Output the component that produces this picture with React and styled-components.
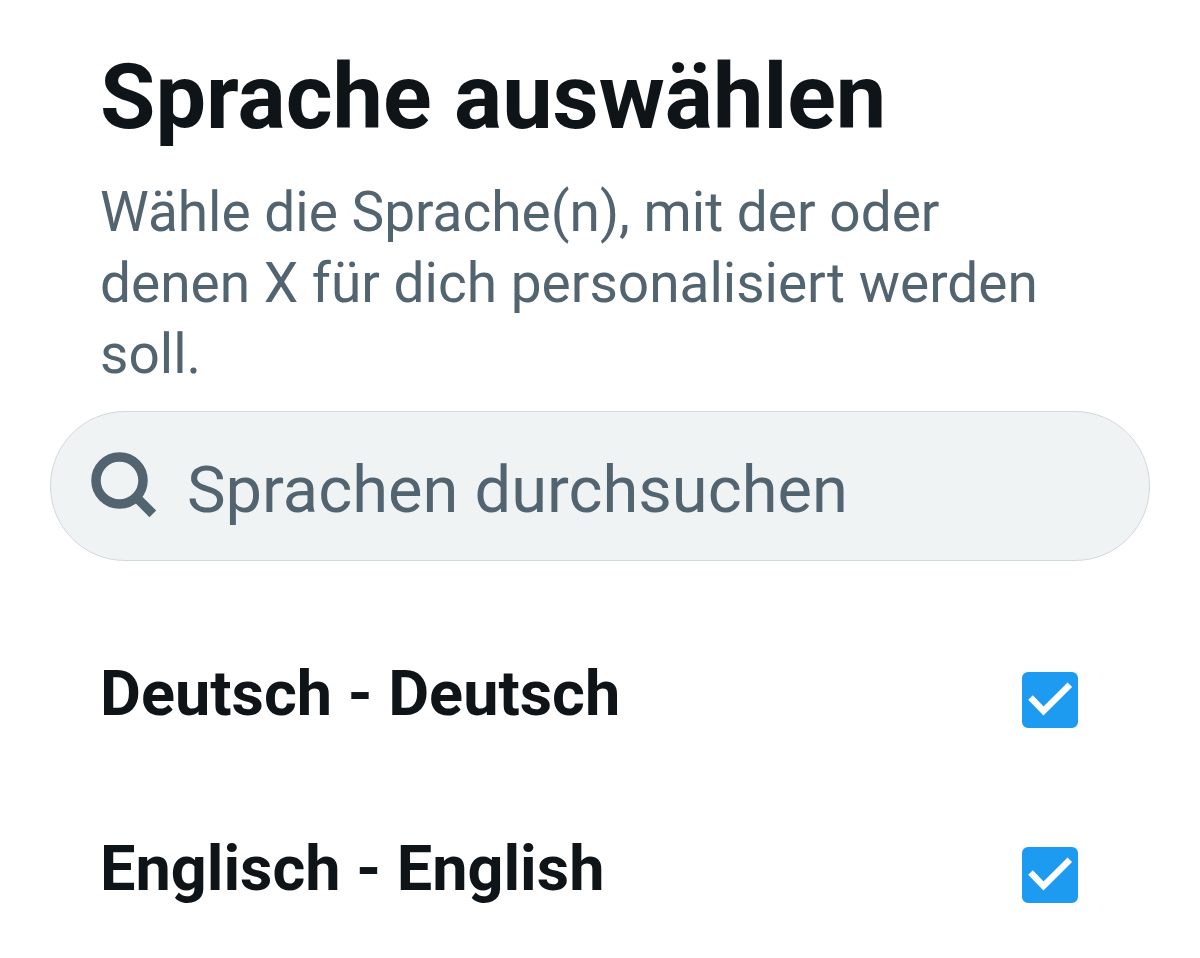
import React, { useState } from "react";
import styled, { createGlobalStyle } from "styled-components";

const LANGUAGES = [
  { id: "de", label: "Deutsch - Deutsch" },
  { id: "en", label: "Englisch - English" },
];

const LanguageRow = ({ language, checked, onToggle }) => (
  <Row>
    <RowLabel htmlFor={`lang-${language.id}`}>{language.label}</RowLabel>
    <CheckWrapper>
      <Checkbox
        type="checkbox"
        id={`lang-${language.id}`}
        checked={checked}
        onChange={() => onToggle(language.id)}
      />
      {checked && (
        <CheckMark viewBox="0 0 56 56" aria-hidden="true">
          <path d="M8.5 25.5L21.5 39L47.8 12.8" />
        </CheckMark>
      )}
    </CheckWrapper>
  </Row>
);

const App = () => {
  const [query, setQuery] = useState("");
  const [selected, setSelected] = useState(["de", "en"]);

  const handleToggle = (id) => {
    setSelected((prev) =>
      prev.includes(id) ? prev.filter((item) => item !== id) : [...prev, id]
    );
  };

  const visible = LANGUAGES.filter((language) =>
    language.label.toLowerCase().includes(query.toLowerCase())
  );

  return (
    <>
      <GlobalStyle />
      <Page>
        <Intro>
          <Title>Sprache auswählen</Title>
          <Description>
            Wähle die Sprache(n), mit der oder denen X für dich personalisiert
            werden soll.
          </Description>
        </Intro>
        <SearchBar>
          <SearchIcon viewBox="0 0 66 68" aria-hidden="true">
            <circle cx="28.5" cy="28.5" r="23.5" />
            <path d="M44 44L61.8 61.8" />
          </SearchIcon>
          <SearchInput
            type="text"
            aria-label="Sprachen durchsuchen"
            placeholder="Sprachen durchsuchen"
            value={query}
            onChange={(e) => setQuery(e.target.value)}
          />
        </SearchBar>
        <LanguageList>
          {visible.map((language) => (
            <LanguageRow
              key={language.id}
              language={language}
              checked={selected.includes(language.id)}
              onToggle={handleToggle}
            />
          ))}
        </LanguageList>
      </Page>
    </>
  );
};

export default App;

const GlobalStyle = createGlobalStyle`
  * {
    box-sizing: border-box;
  }

  body {
    margin: 0;
    background-color: #ffffff;
    color: #0f1419;
    font-family: Roboto, "Liberation Sans", sans-serif;
  }
`;

const Page = styled.main`
  padding: 48px 50px 0;
`;

const Intro = styled.header`
  padding: 0 50px;
`;

const Title = styled.h1`
  margin: 0 0 29px;
  font-size: 90px;
  line-height: 100px;
  font-weight: 700;
`;

const Description = styled.p`
  margin: 0;
  font-size: 55px;
  line-height: 71px;
  color: #536471;
`;

const SearchBar = styled.div`
  display: flex;
  align-items: center;
  gap: 30px;
  height: 150px;
  margin-top: 21px;
  padding: 0 40px;
  border: 1px solid #cfd9de;
  border-radius: 75px;
  background-color: #eff3f4;
`;

const SearchIcon = styled.svg`
  flex: none;
  width: 66px;
  height: 68px;
  fill: none;
  stroke: #536471;
  stroke-width: 9.5;
`;

const SearchInput = styled.input`
  flex: 1;
  min-width: 0;
  padding: 8px 0 0;
  border: none;
  outline: none;
  background: transparent;
  color: #0f1419;
  font-family: inherit;
  font-size: 65px;
  line-height: 80px;

  &::placeholder {
    color: #536471;
    opacity: 1;
  }
`;

const LanguageList = styled.ul`
  margin: 51px 0 0;
  padding: 0 72px 0 50px;
  list-style: none;
`;

const Row = styled.li`
  display: flex;
  align-items: center;
  justify-content: space-between;
  height: 175px;
`;

const RowLabel = styled.label`
  padding-bottom: 12px;
  font-size: 63px;
  line-height: 80px;
  font-weight: 700;
  cursor: pointer;
`;

const CheckWrapper = styled.span`
  display: grid;
  flex: none;
  width: 56px;
  height: 56px;
`;

const Checkbox = styled.input`
  appearance: none;
  grid-area: 1 / 1;
  width: 56px;
  height: 56px;
  margin: 0;
  border: 6px solid #536471;
  border-radius: 6px;
  cursor: pointer;

  &:checked {
    border-color: #1d9bf0;
    background-color: #1d9bf0;
  }
`;

const CheckMark = styled.svg`
  grid-area: 1 / 1;
  width: 56px;
  height: 56px;
  fill: none;
  stroke: #ffffff;
  stroke-width: 6.4;
  pointer-events: none;
`;
